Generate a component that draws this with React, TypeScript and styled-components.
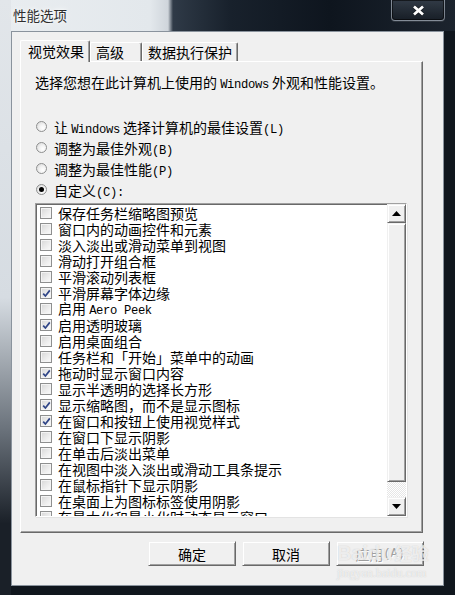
import React from "react";
import styled, { createGlobalStyle } from "styled-components";

const CJK = `"Noto Sans CJK SC", "Noto Sans", sans-serif`;

const GlobalStyle = createGlobalStyle`
  html, body { margin: 0; padding: 0; width: 455px; height: 595px; overflow: hidden; background: #0f151c; }
  #root { width: 455px; height: 595px; }
  * { box-sizing: border-box; }
`;

const Window = styled.div`
  position: relative;
  width: 455px;
  height: 595px;
  padding: 0 11px 9px 11px;
  display: flex;
  flex-direction: column;
  font-family: ${CJK};
  font-size: 14px;
  color: #000;
  background:
    linear-gradient(180deg, #e2e6ea 0, #d6dce2 50%, #6b737c 72%, #1a2028 88%) left top / 11px 100% no-repeat,
    linear-gradient(90deg, #e9edf0 0, #e3e8ec 150px, #cfd5db 168px, #2f3a47 173px, #18212c 230px, #0e151e 330px, #1c242e 455px) left top / 100% 31px no-repeat,
    #10161d;
`;

const TitleBar = styled.div`
  height: 31px;
  display: flex;
  justify-content: space-between;
  align-items: flex-start;
`;

const Title = styled.div`
  margin: 6px 0 0 2px;
  font-size: 13.5px;
  line-height: 18px;
  color: #2e2e2e;
  text-shadow: 0 0 6px rgba(255, 255, 255, 0.95), 0 0 3px rgba(255, 255, 255, 0.9);
`;

const CloseButton = styled.div`
  width: 54px;
  height: 21px;
  margin-right: -1px;
  display: flex;
  align-items: center;
  justify-content: center;
  border: 1px solid rgba(200, 210, 220, 0.55);
  border-top: none;
  border-radius: 0 0 4px 4px;
  background: linear-gradient(180deg, rgba(60, 70, 82, 0.7), rgba(24, 30, 38, 0.8));
  box-shadow: inset 0 0 0 1px rgba(0, 0, 0, 0.55), 0 1px 0 rgba(255, 255, 255, 0.1);
`;

const Client = styled.div`
  flex: 1;
  display: flex;
  flex-direction: column;
  background: #f0f0f0;
  border: 1px solid #8a939d;
  padding: 8px 20px 0 8px;
`;

const TabStrip = styled.div`
  display: flex;
  align-items: flex-end;
  height: 21px;
  position: relative;
  z-index: 1;
`;

const Tab = styled.div<{ $active?: boolean; $w: number }>`
  width: ${(p) => p.$w}px;
  height: ${(p) => (p.$active ? 22 : 19)}px;
  margin-bottom: ${(p) => (p.$active ? -1 : 0)}px;
  padding-left: ${(p) => (p.$active ? 7 : 5)}px;
  line-height: ${(p) => (p.$active ? 20 : 19)}px;
  background: #f0f0f0;
  border-top: 1px solid #fff;
  border-left: 1px solid #fff;
  border-right: 1px solid #696969;
  border-radius: 2px 2px 0 0;
  box-shadow: inset -1px 0 0 #a0a0a0;
  white-space: nowrap;
`;

const Panel = styled.div`
  height: 472px;
  border-top: 1px solid #fff;
  border-left: 1px solid #fff;
  border-right: 1px solid #696969;
  border-bottom: 1px solid #696969;
  box-shadow: inset -1px -1px 0 #a0a0a0;
  padding: 12px 0 0 14px;
  display: flex;
  flex-direction: column;
`;

const Mono = styled.span`
  font-family: "Liberation Mono", "DejaVu Sans Mono", monospace;
  font-size: 12.2px;
  letter-spacing: -0.35px;
`;

const Intro = styled.div`
  line-height: 16px;
  white-space: nowrap;
`;

const RadioGroup = styled.div`
  margin-top: 23px;
  display: flex;
  flex-direction: column;
`;

const RadioRow = styled.div`
  height: 21px;
  display: flex;
  align-items: center;
  padding-left: 1px;
  gap: 7px;
  white-space: nowrap;
`;

const RadioDot = styled.span<{ $on?: boolean }>`
  width: 11px;
  height: 11px;
  border-radius: 50%;
  border: 1px solid #8e8f8f;
  background: radial-gradient(circle at 65% 65%, #ffffff 0, #f2f2f2 40%, #d4d4d4 100%);
  display: flex;
  align-items: center;
  justify-content: center;
  flex: none;
  &::after {
    content: "";
    display: ${(p) => (p.$on ? "block" : "none")};
    width: 5px;
    height: 5px;
    border-radius: 50%;
    background: #000;
  }
`;

const ListBox = styled.div`
  margin-top: 3px;
  width: 372px;
  height: 314px;
  display: flex;
  background: #fff;
  border-top: 1px solid #a0a0a0;
  border-left: 1px solid #a0a0a0;
  border-right: 1px solid #fff;
  border-bottom: 1px solid #fff;
  box-shadow: inset 1px 1px 0 #696969, 1px 1px 0 #e3e3e3;
`;

const Items = styled.div`
  flex: 1;
  overflow: hidden;
  padding-top: 1px;
`;

const ItemRow = styled.div`
  height: 16px;
  display: flex;
  align-items: center;
  padding-left: 4px;
  gap: 6px;
  white-space: nowrap;
  line-height: 16px;
`;

const CheckBox = styled.span`
  width: 12px;
  height: 12px;
  flex: none;
  border: 1px solid #8e8f8f;
  background: linear-gradient(135deg, #d6d6d6 0, #ececec 55%, #fbfbfb 100%);
  box-shadow: inset 0 0 0 1px #f4f4f4;
  display: flex;
  align-items: center;
  justify-content: center;
`;

const ScrollBar = styled.div`
  width: 19px;
  display: flex;
  flex-direction: column;
`;

const raised = `
  background: #f0f0f0;
  border-top: 1px solid #f0f0f0;
  border-left: 1px solid #f0f0f0;
  border-right: 1px solid #696969;
  border-bottom: 1px solid #696969;
  box-shadow: inset 1px 1px 0 #fff, inset -1px -1px 0 #a0a0a0;
`;

const ScrollButton = styled.div`
  height: 19px;
  flex: none;
  display: flex;
  align-items: center;
  justify-content: center;
  ${raised}
`;

const Thumb = styled.div`
  flex: 1;
  ${raised}
`;

const Track = styled.div`
  height: 15px;
  flex: none;
  background: repeating-conic-gradient(#ffffff 0 25%, #e6e6e6 0 50%) 0 0 / 2px 2px;
`;

const ButtonRow = styled.div`
  display: flex;
  justify-content: flex-end;
  gap: 6px;
  margin-top: 8px;
  margin-right: -1px;
`;

const DialogButton = styled.div<{ $disabled?: boolean }>`
  width: 88px;
  height: 25px;
  display: flex;
  align-items: center;
  justify-content: center;
  color: ${(p) => (p.$disabled ? "#a0a0a0" : "#000")};
  text-shadow: ${(p) => (p.$disabled ? "1px 1px 0 #fff" : "none")};
  ${raised}
`;

const Watermark = styled.div`
  position: absolute;
  left: 337px;
  top: 540px;
  width: 100px;
  color: rgba(255, 255, 255, 0.7);
  text-shadow: 0 0 1px rgba(150, 150, 150, 0.5);
  pointer-events: none;
`;

const WmLogo = styled.div`
  display: flex;
  align-items: baseline;
  font-family: "Liberation Sans", sans-serif;
  font-weight: bold;
  font-size: 20px;
  line-height: 26px;
  span { font-family: ${CJK}; font-size: 17px; margin-left: 2px; }
`;

const WmUrl = styled.div`
  font-family: "Liberation Serif", serif;
  font-size: 12px;
  line-height: 12px;
  margin-top: 1px;
`;

const items: [React.ReactNode, boolean][] = [
  ["保存任务栏缩略图预览", false],
  ["窗口内的动画控件和元素", false],
  ["淡入淡出或滑动菜单到视图", false],
  ["滑动打开组合框", false],
  ["平滑滚动列表框", false],
  ["平滑屏幕字体边缘", true],
  [<>启用 <Mono>Aero Peek</Mono></>, false],
  ["启用透明玻璃", true],
  ["启用桌面组合", false],
  ["任务栏和「开始」菜单中的动画", false],
  ["拖动时显示窗口内容", true],
  ["显示半透明的选择长方形", false],
  ["显示缩略图，而不是显示图标", true],
  ["在窗口和按钮上使用视觉样式", true],
  ["在窗口下显示阴影", false],
  ["在单击后淡出菜单", false],
  ["在视图中淡入淡出或滑动工具条提示", false],
  ["在鼠标指针下显示阴影", false],
  ["在桌面上为图标标签使用阴影", false],
  ["在最大化和最小化时动态显示窗口", false],
];

const Tick = () => (
  <svg width="9" height="9" viewBox="0 0 9 9">
    <path d="M1.2 4.6 L3.4 7 L7.8 1.4" fill="none" stroke="#2f4587" strokeWidth="1.7" />
  </svg>
);

const Arrow = ({ up }: { up?: boolean }) => (
  <svg width="9" height="5" viewBox="0 0 9 5">
    <path d={up ? "M0 5 L4.5 0 L9 5 Z" : "M0 0 L9 0 L4.5 5 Z"} fill="#000" />
  </svg>
);

export default function App() {
  return (
    <>
      <GlobalStyle />
      <Window>
        <TitleBar>
          <Title>性能选项</Title>
          <CloseButton>
            <svg width="13" height="11" viewBox="0 0 13 11">
              <path d="M2 1.5 L11 9.5 M11 1.5 L2 9.5" stroke="#000" strokeOpacity="0.4" strokeWidth="4.2" />
              <path d="M2 1.5 L11 9.5 M11 1.5 L2 9.5" stroke="#fff" strokeWidth="2.8" />
            </svg>
          </CloseButton>
        </TitleBar>
        <Client>
          <TabStrip>
            <Tab $active $w={70}>视觉效果</Tab>
            <Tab $w={52}>高级</Tab>
            <Tab $w={96}>数据执行保护</Tab>
          </TabStrip>
          <Panel>
            <Intro>
              选择您想在此计算机上使用的 <Mono>Windows</Mono> 外观和性能设置。
            </Intro>
            <RadioGroup>
              <RadioRow>
                <RadioDot />
                <span>
                  让 <Mono>Windows</Mono> 选择计算机的最佳设置<Mono>(L)</Mono>
                </span>
              </RadioRow>
              <RadioRow>
                <RadioDot />
                <span>
                  调整为最佳外观<Mono>(B)</Mono>
                </span>
              </RadioRow>
              <RadioRow>
                <RadioDot />
                <span>
                  调整为最佳性能<Mono>(P)</Mono>
                </span>
              </RadioRow>
              <RadioRow>
                <RadioDot $on />
                <span>
                  自定义<Mono>(C):</Mono>
                </span>
              </RadioRow>
            </RadioGroup>
            <ListBox>
              <Items>
                {items.map(([label, checked], i) => (
                  <ItemRow key={i}>
                    <CheckBox>{checked && <Tick />}</CheckBox>
                    <span>{label}</span>
                  </ItemRow>
                ))}
              </Items>
              <ScrollBar>
                <ScrollButton>
                  <Arrow up />
                </ScrollButton>
                <Thumb />
                <Track />
                <ScrollButton>
                  <Arrow />
                </ScrollButton>
              </ScrollBar>
            </ListBox>
          </Panel>
          <ButtonRow>
            <DialogButton>确定</DialogButton>
            <DialogButton>取消</DialogButton>
            <DialogButton $disabled>
              应用<Mono>(A)</Mono>
            </DialogButton>
          </ButtonRow>
        </Client>
        <Watermark>
          <WmLogo>
            Baidu<span>经验</span>
          </WmLogo>
          <WmUrl>jingyan.baidu.com</WmUrl>
        </Watermark>
      </Window>
    </>
  );
}
